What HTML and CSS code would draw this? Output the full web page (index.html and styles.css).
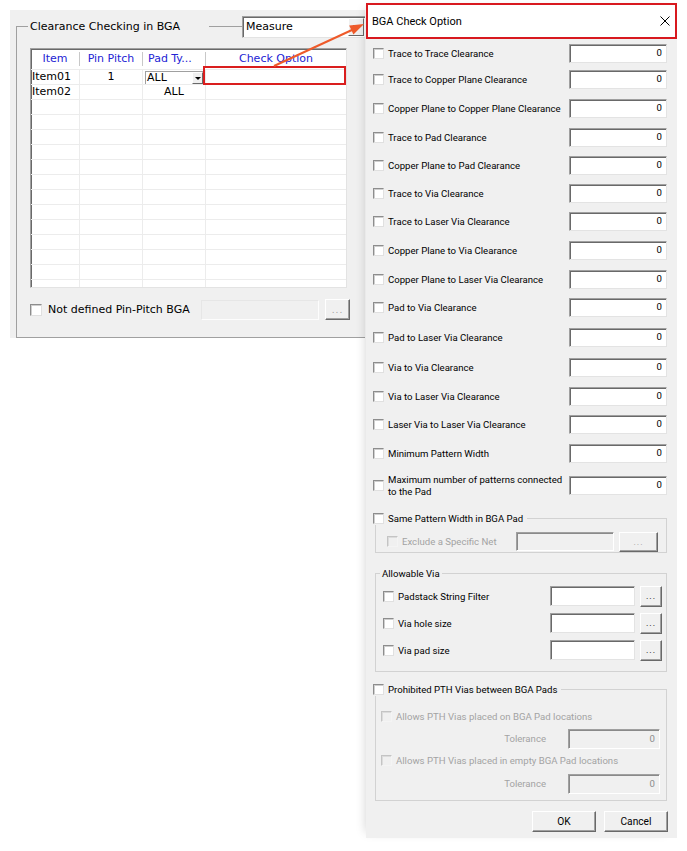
FILE: index.html
```html
<!DOCTYPE html>
<html lang="en">
<head>
<meta charset="utf-8">
<title>BGA Check Option</title>
<link rel="stylesheet" href="styles.css">
</head>
<body>
<div class="screen">
  <div class="mainwin">
    <fieldset class="grp">
      <legend class="grp-legend">
        <span class="grp-title">Clearance Checking in BGA</span>
        <span class="grp-line"></span>
        <span class="combo measure"><span class="combo-text">Measure</span><span class="combo-btn"><span class="tri"></span></span></span>
      </legend>
      <div class="grid">
        <div class="grid-head">
          <div class="hc"><span class="hl c">Item</span></div>
          <div class="hc"><span class="hl c">Pin Pitch</span></div>
          <div class="hc"><span class="hl l">Pad Ty...</span></div>
          <div class="hc"><span class="hl c last">Check Option</span></div>
        </div>
        <div class="grid-body">
          <div class="gr">
            <div class="gc">Item01</div>
            <div class="gc c">1</div>
            <div class="gc"><span class="cell-combo"><span class="cc-text">ALL</span><span class="cc-btn"><span class="tri small"></span></span></span></div>
            <div class="gc"></div>
          </div>
          <div class="gr">
            <div class="gc">Item02</div>
            <div class="gc c"></div>
            <div class="gc c">ALL</div>
            <div class="gc"></div>
          </div>
          <div class="gr"><div class="gc"></div><div class="gc"></div><div class="gc"></div><div class="gc"></div></div>
          <div class="gr"><div class="gc"></div><div class="gc"></div><div class="gc"></div><div class="gc"></div></div>
          <div class="gr"><div class="gc"></div><div class="gc"></div><div class="gc"></div><div class="gc"></div></div>
          <div class="gr"><div class="gc"></div><div class="gc"></div><div class="gc"></div><div class="gc"></div></div>
          <div class="gr"><div class="gc"></div><div class="gc"></div><div class="gc"></div><div class="gc"></div></div>
          <div class="gr"><div class="gc"></div><div class="gc"></div><div class="gc"></div><div class="gc"></div></div>
          <div class="gr"><div class="gc"></div><div class="gc"></div><div class="gc"></div><div class="gc"></div></div>
          <div class="gr"><div class="gc"></div><div class="gc"></div><div class="gc"></div><div class="gc"></div></div>
          <div class="gr"><div class="gc"></div><div class="gc"></div><div class="gc"></div><div class="gc"></div></div>
          <div class="gr"><div class="gc"></div><div class="gc"></div><div class="gc"></div><div class="gc"></div></div>
          <div class="gr"><div class="gc"></div><div class="gc"></div><div class="gc"></div><div class="gc"></div></div>
          <div class="gr"><div class="gc"></div><div class="gc"></div><div class="gc"></div><div class="gc"></div></div>
          <div class="gr"><div class="gc"></div><div class="gc"></div><div class="gc"></div><div class="gc"></div></div>
        </div>
        <div class="cell-mark"></div>
      </div>
      <div class="nd-row">
        <span class="chk big"></span>
        <span class="nd-label">Not defined Pin-Pitch BGA</span>
        <span class="nd-field"></span>
        <span class="btn nd-btn dis">...</span>
      </div>
    </fieldset>
  </div>

  <div class="dialog">
    <div class="titlebar">
      <span class="title">BGA Check Option</span>
      <svg class="close" width="10" height="10" viewBox="0 0 10 10"><path d="M0.5 0.5 L9.5 9.5 M9.5 0.5 L0.5 9.5" stroke="#000" stroke-width="1" fill="none"/></svg>
    </div>
    <div class="dbody">
      <div class="opts">
        <div class="opt"><span class="chk"></span><span class="lbl">Trace to Trace Clearance</span><span class="num">0</span></div>
        <div class="opt"><span class="chk"></span><span class="lbl">Trace to Copper Plane Clearance</span><span class="num">0</span></div>
        <div class="opt"><span class="chk"></span><span class="lbl">Copper Plane to Copper Plane Clearance</span><span class="num">0</span></div>
        <div class="opt"><span class="chk"></span><span class="lbl">Trace to Pad Clearance</span><span class="num">0</span></div>
        <div class="opt"><span class="chk"></span><span class="lbl">Copper Plane to Pad Clearance</span><span class="num">0</span></div>
        <div class="opt"><span class="chk"></span><span class="lbl">Trace to Via Clearance</span><span class="num">0</span></div>
        <div class="opt"><span class="chk"></span><span class="lbl">Trace to Laser Via Clearance</span><span class="num">0</span></div>
        <div class="opt"><span class="chk"></span><span class="lbl">Copper Plane to Via Clearance</span><span class="num">0</span></div>
        <div class="opt"><span class="chk"></span><span class="lbl">Copper Plane to Laser Via Clearance</span><span class="num">0</span></div>
        <div class="opt"><span class="chk"></span><span class="lbl">Pad to Via Clearance</span><span class="num">0</span></div>
        <div class="opt"><span class="chk"></span><span class="lbl">Pad to Laser Via Clearance</span><span class="num">0</span></div>
        <div class="opt"><span class="chk"></span><span class="lbl">Via to Via Clearance</span><span class="num">0</span></div>
        <div class="opt"><span class="chk"></span><span class="lbl">Via to Laser Via Clearance</span><span class="num">0</span></div>
        <div class="opt"><span class="chk"></span><span class="lbl">Laser Via to Laser Via Clearance</span><span class="num">0</span></div>
        <div class="opt"><span class="chk"></span><span class="lbl">Minimum Pattern Width</span><span class="num">0</span></div>
      </div>
      <div class="opt opt-tall"><span class="chk"></span><span class="lbl two">Maximum number of patterns connected<br>to the Pad</span><span class="num">0</span></div>

      <fieldset class="box box-same">
        <legend class="box-legend chk-legend"><span class="chk"></span><span>Same Pattern Width in BGA Pad</span></legend>
        <div class="same-row">
          <span class="chk dis"></span><span class="dis-text">Exclude a Specific Net</span>
          <span class="field dis-field ex-field"></span>
          <span class="btn ex-btn dis">...</span>
        </div>
      </fieldset>

      <fieldset class="box box-via">
        <legend class="box-legend text-legend">Allowable Via</legend>
        <div class="via-rows">
          <div class="via-row"><span class="chk"></span><span class="lbl">Padstack String Filter</span><span class="field via-field"></span><span class="btn via-btn">...</span></div>
          <div class="via-row"><span class="chk"></span><span class="lbl">Via hole size</span><span class="field via-field"></span><span class="btn via-btn">...</span></div>
          <div class="via-row"><span class="chk"></span><span class="lbl">Via pad size</span><span class="field via-field"></span><span class="btn via-btn">...</span></div>
        </div>
      </fieldset>

      <fieldset class="box box-pth">
        <legend class="box-legend chk-legend"><span class="chk"></span><span>Prohibited PTH Vias between BGA Pads</span></legend>
        <div class="pth-body">
          <div class="pth-chk"><span class="chk dis"></span><span class="dis-text">Allows PTH Vias placed on BGA Pad locations</span></div>
          <div class="tol-row first"><span class="dis-text tol-label">Tolerance</span><span class="field dis-field tol-field">0</span></div>
          <div class="pth-chk second"><span class="chk dis"></span><span class="dis-text">Allows PTH Vias placed in empty BGA Pad locations</span></div>
          <div class="tol-row last"><span class="dis-text tol-label">Tolerance</span><span class="field dis-field tol-field">0</span></div>
        </div>
      </fieldset>

      <div class="actions">
        <span class="btn act">OK</span>
        <span class="btn act">Cancel</span>
      </div>
    </div>
  </div>

  <svg class="arrow" width="687" height="100" viewBox="0 0 687 100">
    <line x1="274" y1="66" x2="353" y2="29.5" stroke="#ee5a2a" stroke-width="2"/>
    <polygon points="364,24 349.2,25.4 353.4,34.4" fill="#ee5a2a"/>
  </svg>
</div>
</body>
</html>
```

FILE: styles.css
```css
* { box-sizing: border-box; }

html, body {
  margin: 0;
  padding: 0;
  background: #ffffff;
}

body {
  width: 687px;
  height: 851px;
  overflow: hidden;
  font-family: "DejaVu Sans", sans-serif;
  color: #000;
}

.screen {
  position: relative;
  display: flex;
  align-items: flex-start;
}

/* ---------- left window ---------- */
.mainwin {
  margin: 10px 0 0 10px;
  width: 355px;
  height: 328px;
  background: #f0f0f0;
  overflow: hidden;
  padding: 5px 0 0 6px;
  font-size: 11px;
  font-family: "DejaVu Sans", sans-serif;
  flex: none;
}

.grp {
  margin: 0;
  padding: 0;
  width: 420px;
  height: 323px;
  border: 1px solid #a0a0a0;
  min-width: 0;
}

.grp-legend {
  padding: 0;
  margin-left: 11px;
  height: 23px;
  display: flex;
  align-items: center;
}

.grp-title {
  width: 181px;
  padding-left: 2px;
  line-height: 14px;
  white-space: nowrap;
}

.grp-line {
  width: 33px;
  height: 1px;
  background: #a0a0a0;
}

.combo {
  display: flex;
  background: #fff;
  border: 1px solid;
  border-color: #a0a0a0 #e3e3e3 #e3e3e3 #a0a0a0;
  box-shadow: inset 1px 1px 0 #696969;
}

.measure {
  width: 124px;
  height: 22px;
}

.combo-text {
  flex: 1;
  padding-left: 3px;
  line-height: 19px;
}

.combo-btn {
  width: 16px;
  margin: 1px 1px 1px 0;
  background: #f0f0f0;
  border: 1px solid;
  border-color: #fff #696969 #696969 #fff;
  display: flex;
  align-items: center;
  justify-content: center;
}

.tri {
  width: 0;
  height: 0;
  border-left: 3.5px solid transparent;
  border-right: 3.5px solid transparent;
  border-top: 4px solid #000;
}

.tri.small {
  border-left-width: 3px;
  border-right-width: 3px;
  border-top-width: 3px;
}

/* grid */
.grid {
  position: relative;
  margin: 10px 0 0 13px;
  width: 317px;
  height: 240px;
  background: #fff;
  border: 1px solid;
  border-color: #a0a0a0 #e3e3e3 #e3e3e3 #a0a0a0;
  box-shadow: inset 1px 1px 0 #696969;
}

.grid-head {
  display: grid;
  grid-template-columns: 49px 63px 63px 1fr;
  height: 21px;
  border-bottom: 1px solid #ececec;
  color: #2323d4;
}

.hc {
  padding-top: 3px;
}

.hl {
  display: block;
  height: 14px;
  line-height: 14px;
  border-right: 1px solid #c8c8c8;
  white-space: nowrap;
  overflow: hidden;
}

.hl.c { text-align: center; }
.hl.l { padding-left: 5px; }
.hl.last { border-right: 0; }

.grid-body {
  height: 217px;
  overflow: hidden;
}

.gr {
  display: grid;
  grid-template-columns: 49px 63px 63px 1fr;
  height: 15px;
  border-bottom: 1px solid #ececec;
}

.gc {
  border-right: 1px solid #ececec;
  line-height: 14px;
  padding-left: 1px;
  white-space: nowrap;
}

.gc:last-child { border-right: 0; }
.gc.c { text-align: center; padding-left: 0; }

.cell-combo {
  display: flex;
  margin: 1px 0 0 1px;
  width: 58px;
  height: 13px;
  background: #fff;
  border-top: 1px solid #a0a0a0;
  border-left: 1px solid #a0a0a0;
}

.cc-text {
  flex: 1;
  line-height: 12px;
  padding-left: 1px;
}

.cc-btn {
  width: 11px;
  background: #f0f0f0;
  border: 1px solid;
  border-color: #fff #696969 #696969 #fff;
  display: flex;
  align-items: center;
  justify-content: center;
}

.cell-mark {
  position: absolute;
  left: 172px;
  top: 17px;
  width: 143px;
  height: 19px;
  border: 2px solid #da1e1e;
  pointer-events: none;
}

.nd-row {
  display: flex;
  align-items: center;
  height: 21px;
  margin: 11px 0 0 13px;
}

.chk {
  flex: none;
  width: 11px;
  height: 11px;
  background: #fff;
  border: 1px solid;
  border-color: #8d8d8d #e0e0e0 #e0e0e0 #8d8d8d;
  box-shadow: inset 1px 1px 0 #cfcfcf;
  margin-right: 4px;
}

.chk.big {
  width: 12px;
  height: 12px;
  margin-right: 6px;
}

.nd-label {
  width: 153px;
  white-space: nowrap;
  line-height: 14px;
}

.nd-field {
  width: 118px;
  height: 20px;
  background: #f0f0f0;
  border: 1px solid;
  border-color: #e6e6e6 #fdfdfd #fdfdfd #e6e6e6;
}

.btn {
  display: flex;
  align-items: center;
  justify-content: center;
  background: #f0f0f0;
  border: 1px solid;
  border-color: #ffffff #696969 #696969 #ffffff;
  box-shadow: inset -1px -1px 0 #a0a0a0;
  flex: none;
}

.btn.dis { color: #a0a0a0; }

.nd-btn {
  width: 25px;
  height: 21px;
  margin-left: 6px;
  font-size: 9px;
  letter-spacing: 1px;
  padding-top: 1px;
}

/* ---------- dialog ---------- */
.dialog {
  flex: none;
  margin: 3px 0 0 1px;
  width: 311px;
  height: 835px;
  background: #f0f0f0;
  font-family: Roboto, "Liberation Sans", sans-serif;
  font-size: 9.6px;
  color: #000;
  box-shadow: -6px 0 10px -6px rgba(0, 0, 0, 0.18);
}

.titlebar {
  height: 36px;
  border: 2px solid #d8191f;
  background: #fff;
  display: flex;
  align-items: center;
  justify-content: space-between;
  padding: 0 5px 0 4px;
  font-size: 11px;
}

.close { display: block; }

.dbody {
  padding: 4.5px 10px 0 7px;
}

.opts {
  display: grid;
  grid-template-rows: 26px 29px 29px 28px 28px 28.5px 28.5px 29px 28px 30px 30px 29px 28px 29px 19px;
}

.opts .opt {
  height: 19px;
}

.opt {
  display: flex;
  align-items: center;
}

.lbl {
  flex: 1;
  white-space: nowrap;
}

.lbl.two {
  line-height: 12px;
}

.num {
  flex: none;
  width: 98px;
  height: 19px;
  background: #fff;
  border: 1px solid;
  border-color: #a0a0a0 #e3e3e3 #e3e3e3 #a0a0a0;
  box-shadow: inset 1px 1px 0 #696969;
  text-align: right;
  padding-right: 4px;
  line-height: 16px;
}

.opt-tall {
  margin-top: 11px;
  height: 24px;
}

.box {
  margin: 14px 0 0 2px;
  padding: 0;
  border: 1px solid #d2d2d2;
  min-width: 0;
}

.box-legend {
  padding: 0;
  height: 13px;
  line-height: 13px;
}

.chk-legend {
  display: flex;
  align-items: center;
  margin-left: -3px;
  padding-right: 4px;
}

.text-legend {
  margin-left: 4px;
  padding: 0 2px;
}

.same-row {
  display: flex;
  align-items: center;
  height: 20px;
  margin-top: 7px;
  padding: 0 8px 0 11px;
}

.chk.dis {
  background: #f0f0f0;
  border-color: #c4c4c4 #f4f4f4 #f4f4f4 #c4c4c4;
  box-shadow: inset 1px 1px 0 #dcdcdc;
}

.dis-text {
  color: #a3a3a3;
  white-space: nowrap;
}

.field {
  flex: none;
  background: #fff;
  border: 1px solid;
  border-color: #a0a0a0 #e3e3e3 #e3e3e3 #a0a0a0;
  box-shadow: inset 1px 1px 0 #696969;
}

.dis-field {
  background: #f0f0f0;
  border-color: #a0a0a0 #ffffff #ffffff #a0a0a0;
  box-shadow: inset 1px 1px 0 #8a8a8a;
  color: #8c8c8c;
}

.ex-field {
  width: 98px;
  height: 19px;
  margin-left: auto;
}

.ex-btn {
  width: 39px;
  height: 20px;
  margin-left: 5px;
  font-size: 9px;
  letter-spacing: 1px;
}

.via-rows {
  display: flex;
  flex-direction: column;
  gap: 6px;
  padding: 6px 4px 10px 7px;
}

.via-row {
  display: flex;
  align-items: center;
  height: 21px;
}

.via-field {
  width: 85px;
  height: 20px;
}

.via-btn {
  width: 22px;
  height: 21px;
  margin-left: 5px;
  font-size: 9px;
  letter-spacing: 1px;
}

.box-pth {
  margin-top: 11px;
}

.pth-body {
  padding: 14px 6px 6px 5px;
}

.pth-chk {
  display: flex;
  align-items: center;
  height: 14px;
}

.pth-chk.second { margin-top: 5px; }

.tol-row {
  display: flex;
  align-items: center;
  justify-content: flex-end;
  height: 20px;
  margin-top: 5px;
}

.tol-row.last { margin-top: 6px; }

.tol-label { margin-right: 22px; }

.tol-field {
  width: 92px;
  height: 20px;
  text-align: right;
  padding-right: 4px;
  line-height: 17px;
}

.actions {
  display: flex;
  justify-content: flex-end;
  gap: 8px;
  margin: 10px -1px 0 0;
}

.act {
  width: 64px;
  height: 21px;
  font-size: 10.2px;
}

.arrow {
  position: absolute;
  left: 0;
  top: 0;
  pointer-events: none;
}
```
